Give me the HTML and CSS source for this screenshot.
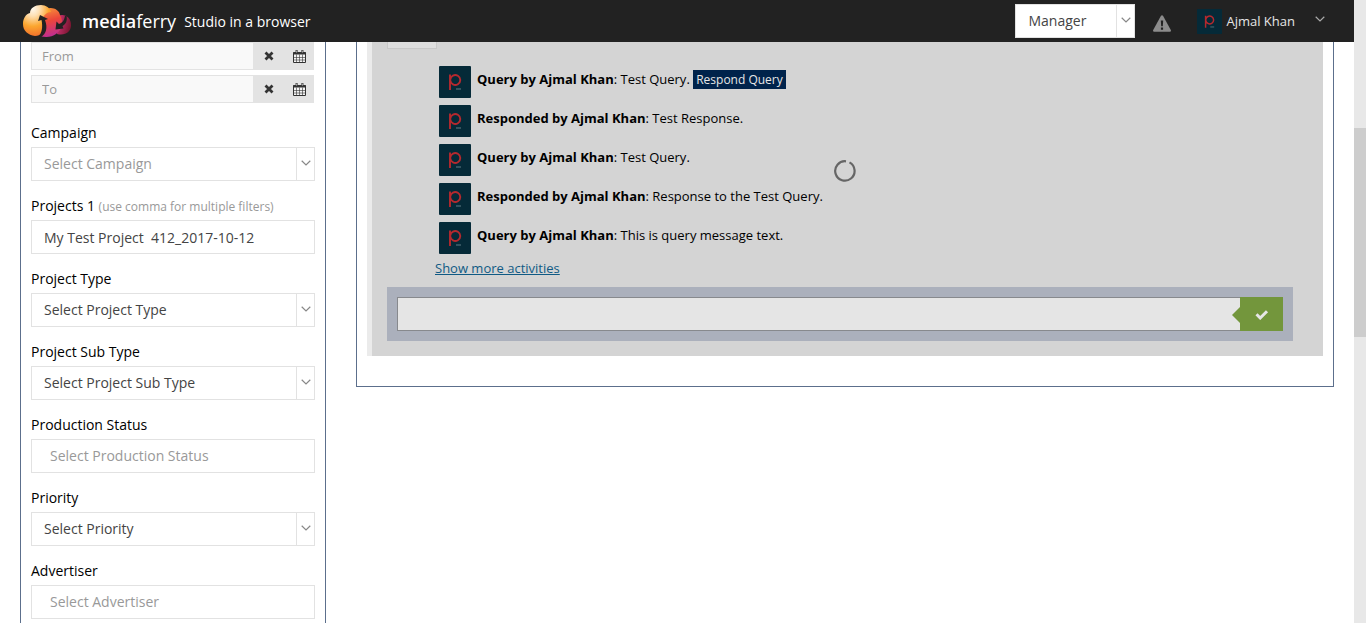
FILE: index.html
```html
<!DOCTYPE html>
<html lang="en">
<head>
<meta charset="utf-8">
<title>mediaferry</title>
<link rel="stylesheet" href="styles.css">
</head>
<body>
<svg class="defs" aria-hidden="true">
  <symbol id="chevron" viewBox="0 0 10 6"><path d="M.7.8 5 5 9.3.8" fill="none" stroke="currentColor" stroke-width="1.2"/></symbol>
  <symbol id="cross" viewBox="0 0 10 10"><path d="M1.500 1.500l7 7M8.500 1.500l-7 7" fill="none" stroke="currentColor" stroke-width="2.800"/></symbol>
  <symbol id="calendar" viewBox="0 0 13 13">
    <path d="M.5 2.500h12v10H.5z" fill="#f4f4f4" stroke="currentColor"/>
    <path d="M.5 2h12v2.600H.5zM2.600 0h2v3h-2zM8.400 0h2v3h-2z" fill="currentColor"/>
    <path d="M3.500 4.500v8M6.500 4.500v8M9.500 4.500v8M1 7.500h11M1 10h11" stroke="currentColor" stroke-width=".6"/>
    <path d="M3.600.6v2M9.400.6v2" stroke="#e3e3e3" stroke-width=".7"/>
  </symbol>
  <symbol id="avatar" viewBox="0 0 32 32">
    <rect width="32" height="32" rx="1" fill="#052a38"/>
    <path d="M11 24V8.500M11.300 13.700a5 5 0 1 1 0 .6" fill="none" stroke="#b5292e" stroke-width="1.900"/>
    <path d="M17 23h5" stroke="#53717a" stroke-width="1.200"/>
  </symbol>
</svg>
<div class="shell">
  <div class="app">
    <header class="topbar">
      <a class="brand" href="#">
        <svg class="logo" viewBox="0 0 50 34" aria-hidden="true">
          <defs>
            <radialGradient id="g1" cx=".35" cy=".12" r=".95"><stop offset="0" stop-color="#fff8ee"/><stop offset=".25" stop-color="#fee0b4"/><stop offset=".6" stop-color="#fba62f"/><stop offset="1" stop-color="#f0682a"/></radialGradient>
            <linearGradient id="g2" x1="0" y1="0" x2=".2" y2="1"><stop offset="0" stop-color="#f79a3a"/><stop offset=".5" stop-color="#ec463a"/><stop offset="1" stop-color="#c22f8c"/></linearGradient>
            <linearGradient id="g3" x1="0" y1="0" x2="1" y2=".3"><stop offset="0" stop-color="#d5357b"/><stop offset="1" stop-color="#7d1733"/></linearGradient>
          </defs>
          <path d="M36 12c7-3 13 2 13 9s-6 11-14 9z" fill="url(#g3)"/>
          <path d="M20 8c6-7 17-4 18 3 4 7 2 15-4 19-4 3-10 4-16 2z" fill="url(#g2)"/>
          <path d="M8 9C8 4 13 1 19 1c5 0 9 3 10 7-4 0-8 3-8 8l-1 13c-2 2-4 3-7 3C6 31 1 27 1 20 1 14 4 10 8 9z" fill="url(#g1)"/>
          <path d="M16 33c4-4 5-10 3.500-17L16 17l2-6 8 4-3 1c3 8 1 14-4 17z" fill="#222"/>
          <path d="M44.500 12c1 5-.5 8-4 10l1 2.500-8 1 1-8 2.500 2.500c3-1 5-3 6-8z" fill="#222"/>
        </svg>
        <span class="brand-name"><b>media</b>ferry</span>
        <span class="tagline">Studio in a browser</span>
      </a>
      <div class="tools">
        <div class="select role">
          <select aria-label="Role"><option>Manager</option></select>
          <span class="arrow"><svg><use href="#chevron"/></svg></span>
        </div>
        <button class="alert" aria-label="Alerts">
          <svg viewBox="0 0 18 17"><path d="M8 .8Q9-.4 10 .8L17.800 15q.6 1.600-1 1.800H1.200Q-.4 16.600.2 15z" fill="#8c8c8c"/><path d="M7.800 5.500h2.400L9.800 11.300H8.200zM7.900 12.500h2.200v2.200H7.900z" fill="#222"/></svg>
        </button>
        <button class="user">
          <svg class="user-pic"><use href="#avatar"/></svg>
          <span>Ajmal Khan</span>
          <svg class="chev"><use href="#chevron"/></svg>
        </button>
      </div>
    </header>
    <main class="columns">
      <form class="filters">
        <div class="date-row">
          <input type="text" placeholder="From" aria-label="From">
          <button type="button" aria-label="Clear from date"><svg class="i-cross"><use href="#cross"/></svg></button>
          <button type="button" aria-label="Pick from date"><svg class="i-cal"><use href="#calendar"/></svg></button>
        </div>
        <div class="date-row">
          <input type="text" placeholder="To" aria-label="To">
          <button type="button" aria-label="Clear to date"><svg class="i-cross"><use href="#cross"/></svg></button>
          <button type="button" aria-label="Pick to date"><svg class="i-cal"><use href="#calendar"/></svg></button>
        </div>
        <div class="fields">
          <div class="field">
            <label for="campaign">Campaign</label>
            <div class="select muted"><select id="campaign"><option>Select Campaign</option></select><span class="arrow"><svg><use href="#chevron"/></svg></span></div>
          </div>
          <div class="field">
            <label for="projects">Projects 1 <small>(use comma for multiple filters)</small></label>
            <input class="text" id="projects" type="text" value="My Test Project  412_2017-10-12">
          </div>
          <div class="field">
            <label for="ptype">Project Type</label>
            <div class="select"><select id="ptype"><option>Select Project Type</option></select><span class="arrow"><svg><use href="#chevron"/></svg></span></div>
          </div>
          <div class="field">
            <label for="psub">Project Sub Type</label>
            <div class="select"><select id="psub"><option>Select Project Sub Type</option></select><span class="arrow"><svg><use href="#chevron"/></svg></span></div>
          </div>
          <div class="field">
            <label for="status">Production Status</label>
            <input class="text multi" id="status" type="text" placeholder="Select Production Status">
          </div>
          <div class="field">
            <label for="priority">Priority</label>
            <div class="select"><select id="priority"><option>Select Priority</option></select><span class="arrow"><svg><use href="#chevron"/></svg></span></div>
          </div>
          <div class="field">
            <label for="advertiser">Advertiser</label>
            <input class="text multi" id="advertiser" type="text" placeholder="Select Advertiser">
          </div>
        </div>
      </form>
      <section class="panel">
        <div class="activity">
          <div class="tab"></div>
          <ul class="feed">
            <li><svg class="pic"><use href="#avatar"/></svg><p><b>Query by Ajmal Khan</b>: Test Query. <button class="respond">Respond Query</button></p></li>
            <li><svg class="pic"><use href="#avatar"/></svg><p><b>Responded by Ajmal Khan</b>: Test Response.</p></li>
            <li><svg class="pic"><use href="#avatar"/></svg><p><b>Query by Ajmal Khan</b>: Test Query.</p></li>
            <li><svg class="pic"><use href="#avatar"/></svg><p><b>Responded by Ajmal Khan</b>: Response to the Test Query.</p></li>
            <li><svg class="pic"><use href="#avatar"/></svg><p><b>Query by Ajmal Khan</b>: This is query message text.</p></li>
          </ul>
          <a class="more" href="#">Show more activities</a>
          <form class="reply">
            <div class="reply-box">
              <input type="text" aria-label="Message">
              <button type="button" aria-label="Send"><svg viewBox="0 0 14 11"><path d="M1.500 5.300 5.200 9 12 2.200" fill="none" stroke="#e6e6e6" stroke-width="3"/></svg></button>
            </div>
          </form>
        </div>
        <svg class="spinner" viewBox="0 0 22 22" aria-hidden="true"><path d="M15.500 2.400A9.700 9.700 0 1 1 12 1.300" fill="none" stroke="#666" stroke-width="2.200"/></svg>
      </section>
    </main>
  </div>
  <div class="scrollbar" aria-hidden="true"><div class="thumb"></div></div>
</div>
</body>
</html>
```
FILE: styles.css
```css
* { box-sizing: border-box; }

body {
  margin: 0;
  background: #fff;
  color: #000;
  font: 14px/20px "Open Sans", "Noto Sans", sans-serif;
}

input, select, button { font: inherit; border-radius: 0; margin: 0; }
button { padding: 0; border: 0; background: none; color: inherit; }
svg { display: block; }
.defs { display: none; }

.shell {
  display: grid;
  grid-template-columns: minmax(0, 1fr) 12px;
  height: 100vh;
  overflow: hidden;
}
.app { display: flex; flex-direction: column; min-height: 0; }

.scrollbar { background: #e8e8e8; padding-top: 128px; }
.thumb { height: 209px; background: #cdcdcd; }

/* Top bar */
.topbar {
  flex: none;
  display: flex;
  justify-content: space-between;
  height: 42px;
  padding: 0 29px 0 22px;
  background: #222;
  color: #fff;
}
.brand { display: flex; align-items: center; color: #fff; text-decoration: none; }
.logo { width: 50px; height: 34px; margin-right: 10px; }
.brand-name { font-size: 18px; line-height: 24px; margin-right: 8px; }
.brand-name b { font-weight: 600; }
.tagline { padding-top: 2px; }
.tools { display: flex; align-items: center; }
.role { width: 120px; }
.alert { margin: 4px 26px 0 18px; }
.alert svg { width: 18px; height: 17px; }
.user { display: flex; align-items: center; font-size: 13px; color: #e6e6e6; }
.user-pic { width: 25px; height: 25px; margin-right: 4px; }
.chev { width: 10px; height: 6px; margin: 0 0 4px 20px; color: #aaa; }

/* Form controls */
.select { display: flex; height: 34px; border: 1px solid #e2e2e2; background: #fff; color: #444; }
.select select {
  flex: 1;
  min-width: 0;
  appearance: none;
  border: 0;
  padding: 0 12px;
  background: none;
  color: inherit;
}
.select.muted select { color: #999; }
.arrow {
  display: grid;
  place-items: center;
  width: 18px;
  padding-bottom: 2px;
  border-left: 1px solid #e2e2e2;
  color: #888;
}
.arrow svg { width: 10px; height: 6px; }
.text {
  width: 100%;
  height: 34px;
  padding: 0 12px;
  border: 1px solid #e2e2e2;
  background: #fff;
  color: #444;
}
.text.multi { padding: 0 18px 2px; }
::placeholder { color: #999; opacity: 1; }

/* Layout */
.columns {
  flex: 1;
  min-height: 0;
  display: grid;
  grid-template-columns: 306px minmax(0, 1fr);
  align-items: start;
  gap: 30px;
  padding: 0 20px;
}

.filters {
  padding: 0 10px 20px;
  border: 1px solid #5c6f8c;
  border-width: 0 1px;
}
.date-row { display: flex; height: 28px; margin: 0 1px 5px 0; background: #e3e3e3; font-size: 13px; }
.date-row input {
  flex: 1;
  min-width: 0;
  padding: 0 10px;
  border: 1px solid #e3e3e3;
  background: #f9f9f9;
}
.date-row button { display: grid; place-items: center; width: 30px; color: #333; }
.i-cross { width: 10px; height: 10px; }
.i-cal { width: 13px; height: 13px; }

.fields { display: flex; flex-direction: column; gap: 15px; padding-top: 15px; }
.field label { display: block; margin-bottom: 4px; }
.field small { font-size: 12px; line-height: 1; color: #999; }

/* Activity panel */
.panel {
  position: relative;
  padding: 0 10px 30px;
  border: 1px solid #5c6f8c;
  border-top: 0;
}
.activity {
  padding: 0 30px 15px 15px;
  border-left: 5px solid #ebebeb;
  background: #d4d4d4;
  font-size: 13px;
}
.tab { width: 50px; height: 7px; border: 1px solid #c8c8c8; border-top: 0; background: #dedede; }
.feed {
  display: flex;
  flex-direction: column;
  gap: 7px;
  margin: 0;
  padding: 17px 0 4px 52px;
  list-style: none;
}
.feed li { display: flex; gap: 6px; height: 32px; }
.feed p { margin: 0; padding-top: 3px; }
.feed b { font-weight: 700; }
.pic { width: 32px; height: 32px; }
.respond { padding: 0 3px; background: #00234b; color: #e6e6e6; font-size: 12px; line-height: 19px; }
.more { display: table; margin: 0 0 9px 48px; color: #105a84; }

.reply { padding: 10px; background: #abb0bc; }
.reply-box { display: flex; }
.reply-box input {
  flex: 1;
  min-width: 0;
  height: 34px;
  border: 1px solid #87898d;
  border-right: 0;
  background: #e5e5e5;
}
.reply-box button { position: relative; display: grid; place-items: center; width: 43px; background: #73963c; }
.reply-box button::before {
  content: "";
  position: absolute;
  left: -8px;
  top: 10px;
  border: solid transparent;
  border-width: 8px 8px 8px 0;
  border-right-color: #73963c;
}
.reply-box svg { width: 14px; height: 11px; }

.spinner { position: absolute; top: 118px; left: calc(50% - 11px); width: 22px; height: 22px; }
```
